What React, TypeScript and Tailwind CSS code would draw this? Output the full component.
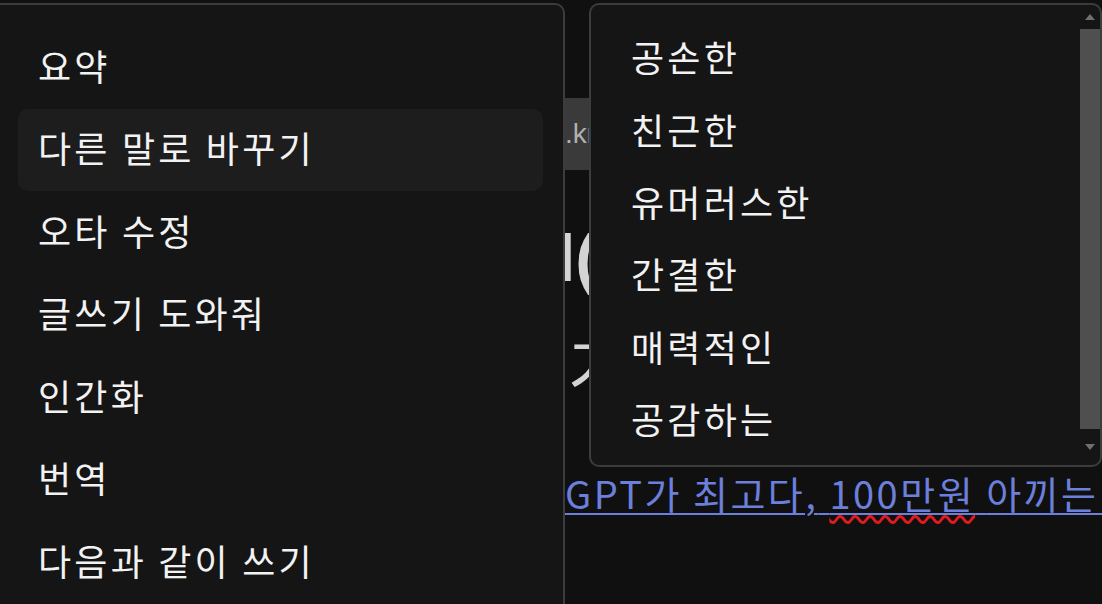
import React from 'react';

const ACTIONS = ['요약', '다른 말로 바꾸기', '오타 수정', '글쓰기 도와줘', '인간화', '번역', '다음과 같이 쓰기'];
const TONES = ['공손한', '친근한', '유머러스한', '간결한', '매력적인', '공감하는'];

const FONT = "font-['Noto_Sans_CJK_KR','Noto_Sans',sans-serif]";

const App: React.FC = () => {
  return (
    <div className={`relative w-[1102px] h-[604px] overflow-hidden bg-[#101010] ${FONT}`}>
      {/* page underneath the menus */}
      <div className="pt-[98px]">
        <div className="ml-[560px] w-[300px] h-[72px] bg-[#3a3a3a] pl-[5px] flex items-center text-[28px] text-[#b0b0b0] font-['Liberation_Sans',sans-serif]">
          .kr/blog
        </div>
        <div className="mt-[38px] ml-[557px] text-[66px] text-[#d4d4d4]">
          <div className="leading-[100px] whitespace-nowrap font-['Liberation_Sans',sans-serif] font-bold">l(</div>
          <div className="leading-[112px] whitespace-nowrap pl-[11px]">가</div>
        </div>
        <div className="mt-[48px] ml-[565px] leading-[50px] text-[38px] tracking-[2.5px] whitespace-nowrap">
          <a className="text-[#6b7fdb] underline decoration-2 underline-offset-[4px]">
            GPT가 최고다,{' '}
            <span className="underline decoration-wavy decoration-[#e01b1b] decoration-[3px] underline-offset-[6px]">100만원</span>{' '}
            아끼는 방법
          </a>
        </div>
      </div>

      {/* left action menu */}
      <div className="absolute left-[-10px] top-[3px] w-[575px] h-[640px] rounded-[10px] border-2 border-[#3c3c3c] bg-[#151515] pt-[21px] pl-[26px] pr-[20px]">
        {ACTIONS.map((label, i) => (
          <div
            key={label}
            className={`h-[82.5px] flex items-center pl-[20px] pb-[5px] rounded-[10px] text-[36px] tracking-[3.2px] text-[#f2f2f2] whitespace-nowrap ${i === 1 ? 'bg-[#1d1d1d]' : ''}`}
          >
            {label}
          </div>
        ))}
      </div>

      {/* right tone submenu */}
      <div className="absolute left-[589px] top-[3px] w-[513px] h-[464px] rounded-[10px] border-2 border-[#3c3c3c] bg-[#151515] flex overflow-hidden">
        <div className="flex-1 pt-[15px] pl-[40px]">
          {TONES.map(label => (
            <div key={label} className="h-[72.4px] flex items-center text-[36px] tracking-[3.2px] text-[#f2f2f2] whitespace-nowrap">
              {label}
            </div>
          ))}
        </div>
        <div className="w-[20px] flex flex-col items-center">
          <div className="h-[24px] flex items-center justify-center">
            <div className="w-0 h-0 border-l-[5px] border-r-[5px] border-b-[6px] border-l-transparent border-r-transparent border-b-[#707070]" />
          </div>
          <div className="w-[20px] h-[400px] bg-[#4f4f4f]" />
          <div className="flex-1 flex items-center justify-center">
            <div className="w-0 h-0 border-l-[5px] border-r-[5px] border-t-[6px] border-l-transparent border-r-transparent border-t-[#707070]" />
          </div>
        </div>
      </div>
    </div>
  );
};

export default App;
